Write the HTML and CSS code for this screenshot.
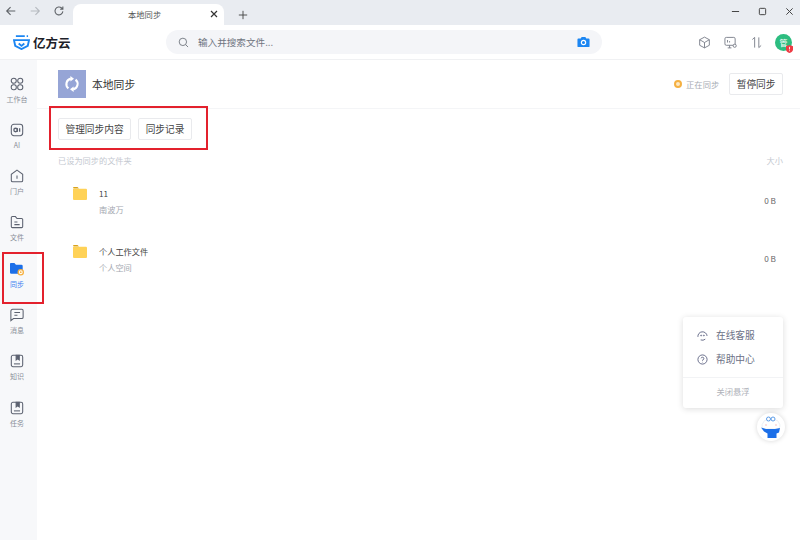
FILE: index.html
```html
<!DOCTYPE html>
<html lang="zh-CN">
<head>
    <meta charset="UTF-8">
    <title>本地同步</title>
    <link rel="stylesheet" href="styles.css">
</head>
<body>
    <div class="window">
        <!-- Browser title bar -->
        <div class="titlebar">
            <div class="nav-btns">
                <svg class="nav-icon" viewBox="0 0 14 14"><path d="M12 7H2M6.500 2.500 2 7l4.500 4.500" /></svg>
                <svg class="nav-icon nav-off" viewBox="0 0 14 14"><path d="M2 7h10M7.500 2.500 12 7l-4.500 4.500" /></svg>
                <svg class="nav-icon" viewBox="0 0 14 14"><path d="M11.500 7.500A4.600 4.600 0 1 1 10 3.500L11.500 5M11.500 1.800V5H8.300" /></svg>
            </div>
            <div class="tab">
                <span class="tab-title">本地同步</span>
                <svg class="tab-close" viewBox="0 0 8 8"><path d="M1 1l6 6M7 1 1 7" /></svg>
            </div>
            <svg class="tab-add" viewBox="0 0 12 12"><path d="M6 1v10M1 6h10" /></svg>
            <div class="win-btns">
                <svg class="win-icon" viewBox="0 0 10 10"><path d="M1 5h8" /></svg>
                <svg class="win-icon" viewBox="0 0 10 10"><rect x="1.500" y="1.500" width="7" height="7" rx="1" /></svg>
                <svg class="win-icon" viewBox="0 0 10 10"><path d="M1.500 1.500l7 7M8.500 1.500l-7 7" /></svg>
            </div>
        </div>

        <!-- App header with logo and search -->
        <div class="appbar">
            <div class="logo">
                <svg class="logo-mark" viewBox="0 0 18 16"><path d="M3 1.200h9.500M14.500 1.200h1.500" /><path d="M1 5.500h16l-1.300 6L9 15l-6.700-3.500z" /><path d="M6 9l3 2.600L12 9" /></svg>
                <span class="logo-text">亿方云</span>
            </div>
            <div class="search">
                <svg class="search-icon" viewBox="0 0 14 14"><circle cx="6.200" cy="6.200" r="4.700" /><path d="M9.800 9.800 12.800 12.800" /></svg>
                <span class="search-text">输入并搜索文件...</span>
                <svg class="camera" viewBox="0 0 14 12"><path d="M1.500 2.200h2.500L5 .7h4l1 1.500h2.500a1 1 0 0 1 1 1v7.300a1 1 0 0 1-1 1h-11a1 1 0 0 1-1-1V3.200a1 1 0 0 1 1-1z" fill="#1c86f2" /><circle cx="7" cy="6.600" r="2.300" fill="none" stroke="#fff" stroke-width="1.300" /></svg>
            </div>
            <div class="app-tools">
                <svg class="tool-icon" viewBox="0 0 14 14"><path d="M7 1.200 12.200 4v6L7 12.800 1.800 10V4zM1.800 4 7 7l5.200-3M7 7v5.800" /></svg>
                <svg class="tool-icon" viewBox="0 0 14 14"><rect x="1" y="1.500" width="11" height="8.500" rx="1.500" /><path d="M4 12.800h4M6 10v2.800M3.800 4.300v2.700M6 5.500v1.500" /><circle cx="11.500" cy="10.500" r="1.700" fill="#fff" /></svg>
                <svg class="tool-icon" viewBox="0 0 14 14"><path d="M5 12.500V1.500L2.500 3.800M9.500 1.500v11l2.500-2.300" /></svg>
                <div class="avatar">
                    管
                    <svg class="avatar-badge" viewBox="0 0 8 9"><path d="M4 0 8 1.300V5C8 7 6 8.300 4 9 2 8.300 0 7 0 5V1.300z" fill="#ee3b44" /><path d="M4 2v3M4 6v1" stroke="#fff" /></svg>
                </div>
            </div>
        </div>

        <div class="body">
            <!-- Left navigation -->
            <nav class="sidebar">
                <a class="nav-item">
                    <svg class="nav-svg" viewBox="0 0 16 16"><circle cx="4.300" cy="4.300" r="2.900" /><circle cx="11.700" cy="4.300" r="2.900" /><rect x="1.400" y="8.800" width="5.800" height="5.800" rx="2.500" /><rect x="8.800" y="8.800" width="5.800" height="5.800" rx="2.500" /></svg>
                    <span>工作台</span>
                </a>
                <a class="nav-item">
                    <svg class="nav-svg" viewBox="0 0 16 16"><rect x="1.500" y="1.500" width="13" height="13" rx="3" /><circle cx="6.400" cy="8" r="2" stroke-width="1.500" /><path d="M8.400 6v4M11 6v4" stroke-width="1.500" /></svg>
                    <span>AI</span>
                </a>
                <a class="nav-item">
                    <svg class="nav-svg" viewBox="0 0 16 16"><path d="M8 1.300 14.500 6v7a1.500 1.500 0 0 1-1.500 1.500H3A1.500 1.500 0 0 1 1.500 13V6z" /><path d="M8 7.500v3.500" /></svg>
                    <span>门户</span>
                </a>
                <a class="nav-item">
                    <svg class="nav-svg" viewBox="0 0 16 16"><path d="M1.500 3A1.200 1.200 0 0 1 2.700 1.800h3.500L8 4h5.300a1.200 1.200 0 0 1 1.200 1.200v8a1.200 1.200 0 0 1-1.200 1.200H2.700a1.200 1.200 0 0 1-1.200-1.200z" /><path d="M5 8h3.500M5 11h6" /></svg>
                    <span>文件</span>
                </a>
                <a class="nav-item nav-active">
                    <svg class="nav-svg sync-svg" viewBox="0 0 16 16"><path d="M0 2a1 1 0 0 1 1-1h4l1.800 2H13a1.500 1.500 0 0 1 1.500 1.500V12a1.500 1.500 0 0 1-1.500 1.500H1.500A1.500 1.500 0 0 1 0 12z" fill="#1c6fe8" /><circle cx="12.300" cy="11.700" r="3.700" fill="#f5b041" /><circle cx="12.300" cy="11.700" r="1.600" fill="none" stroke="#fff" /></svg>
                    <span>同步</span>
                </a>
                <a class="nav-item">
                    <svg class="nav-svg" viewBox="0 0 16 16"><path d="M3 1.500h10.500A1.500 1.500 0 0 1 15 3v7.500a1.500 1.500 0 0 1-1.500 1.500H4l-3 2.500V3.500A2 2 0 0 1 3 1.500z" /><path d="M5 5.200h6.500M5 8.300h3.500" /></svg>
                    <span>消息</span>
                </a>
                <a class="nav-item">
                    <svg class="nav-svg" viewBox="0 0 16 16"><rect x="1.500" y="1.500" width="13" height="13" rx="1.800" /><path d="M7 1.500v5.200l1.800-1.300 1.800 1.300V1.500z" fill="#5c6270" /><path d="M4.500 11.300h7" /></svg>
                    <span>知识</span>
                </a>
                <a class="nav-item">
                    <svg class="nav-svg" viewBox="0 0 16 16"><rect x="1.500" y="1.500" width="13" height="13" rx="1.800" /><path d="M7 1.500v5.200l1.800-1.300 1.800 1.300V1.500z" fill="#5c6270" /><path d="M4.500 11.300h7" /></svg>
                    <span>任务</span>
                </a>
            </nav>

            <main class="content">
                <div class="page-head">
                    <div class="page-icon">
                        <svg viewBox="0 0 20 20"><path d="M5.500 15.500A7 7 0 0 1 8.500 3.300" class="sync-arc" /><path d="M8 0l4.500 3.400L8 6.800z" /><path d="M14.500 4.500A7 7 0 0 1 11.500 16.700" class="sync-arc" /><path d="M12 20l-4.500-3.400L12 13.200z" /></svg>
                    </div>
                    <h1 class="page-title">本地同步</h1>
                    <div class="sync-status">
                        <span class="status-dot"></span>
                        <span>正在同步</span>
                    </div>
                    <button class="btn">暂停同步</button>
                </div>

                <div class="actions">
                    <button class="btn">管理同步内容</button>
                    <button class="btn">同步记录</button>
                </div>

                <div class="list-head">
                    <span>已设为同步的文件夹</span>
                    <span>大小</span>
                </div>

                <div class="file-row">
                    <svg class="folder" viewBox="0 0 14 13"><path d="M0 1a1 1 0 0 1 1-1h3.500l1.500 1.500H1z" fill="#d9a21b" /><path d="M0 1.800h13a1 1 0 0 1 1 1V12a1 1 0 0 1-1 1H1a1 1 0 0 1-1-1z" fill="#ffd257" /></svg>
                    <div class="file-info">
                        <div class="file-name">11</div>
                        <div class="file-owner">南波万</div>
                    </div>
                    <div class="file-size">0 B</div>
                </div>
                <div class="file-row">
                    <svg class="folder" viewBox="0 0 14 13"><path d="M0 1a1 1 0 0 1 1-1h3.500l1.500 1.500H1z" fill="#d9a21b" /><path d="M0 1.800h13a1 1 0 0 1 1 1V12a1 1 0 0 1-1 1H1a1 1 0 0 1-1-1z" fill="#ffd257" /></svg>
                    <div class="file-info">
                        <div class="file-name">个人工作文件</div>
                        <div class="file-owner">个人空间</div>
                    </div>
                    <div class="file-size">0 B</div>
                </div>
            </main>
        </div>

        <!-- Red annotation boxes -->
        <div class="mark mark-nav"></div>
        <div class="mark mark-actions"></div>

        <!-- Floating help panel -->
        <div class="float-panel">
            <div class="float-item">
                <svg class="float-icon" viewBox="0 0 12 12"><path d="M1 7.500A5 5 0 1 1 11 6.500M9 10a5 5 0 0 1-5 .8" /><circle cx="4.500" cy="6" r=".5" /><circle cx="7.500" cy="6" r=".5" /></svg>
                <span>在线客服</span>
            </div>
            <div class="float-item">
                <svg class="float-icon" viewBox="0 0 12 12"><circle cx="6" cy="6" r="5" /><path d="M4.500 4.700A1.500 1.500 0 1 1 6 6.500v.7M6 8.600v.5" /></svg>
                <span>帮助中心</span>
            </div>
            <div class="float-close">关闭悬浮</div>
        </div>
        <div class="mascot">
            <svg viewBox="0 0 26 26"><path d="M6 15a4 4 0 0 1-1-6 4 4 0 0 1 4-3 6 6 0 0 1 8 0 4 4 0 0 1 4 3 4 4 0 0 1-1 6z" fill="#fff" stroke="#dfe4ec" stroke-width=".6" /><circle cx="10.500" cy="5" r="2" fill="#fff" stroke="#5d9de8" /><circle cx="15" cy="5" r="2" fill="#fff" stroke="#5d9de8" /><circle cx="8" cy="11" r="1.100" fill="#fbdada" /><circle cx="18" cy="11" r="1.100" fill="#fbdada" /><path d="M3 13.500 8 15l1 0h8l5-1-1 4.500-2.500 1V24H9.500v-4.500L6 17.500z" fill="#1c6fe8" /></svg>
        </div>
    </div>
</body>
</html>
```

FILE: styles.css
```css
/* General layout */
* {
    box-sizing: border-box;
}

html,
body {
    margin: 0;
    height: 100%;
}

body {
    font-family: "Noto Sans CJK SC", "Noto Sans", sans-serif;
    background-color: #fff;
    overflow: hidden;
}

.window {
    position: relative;
    width: 800px;
    height: 540px;
    display: flex;
    flex-direction: column;
    overflow: hidden;
}

svg {
    display: block;
    fill: none;
}

/* Browser title bar */
.titlebar {
    height: 25px;
    flex: none;
    display: flex;
    align-items: flex-end;
    background-color: #e9ecf1;
}

.nav-btns {
    width: 73px;
    height: 25px;
    padding: 5px 0 0 5px;
    display: flex;
    gap: 12px;
    flex: none;
}

.nav-icon {
    width: 12px;
    height: 12px;
    stroke: #5f6368;
    stroke-width: 1.300;
}

.nav-off {
    stroke: #b5b9bf;
}

.tab {
    width: 151px;
    height: 21px;
    flex: none;
    display: flex;
    align-items: center;
    background-color: #fff;
    border-radius: 8px 8px 0 0;
    padding: 0 6px 2px 55px;
}

.tab-title {
    font-size: 8.300px;
    color: #555;
    flex: 1;
}

.tab-close {
    width: 8px;
    height: 8px;
    stroke: #333;
    stroke-width: 1.200;
}

.tab-add {
    width: 10px;
    height: 10px;
    margin: 0 0 5px 14px;
    stroke: #444;
    stroke-width: 1.100;
    flex: none;
}

.win-btns {
    margin-left: auto;
    height: 25px;
    padding: 7px 6px 0 0;
    display: flex;
    gap: 18px;
}

.win-icon {
    width: 9px;
    height: 9px;
    stroke: #444;
    stroke-width: 1.100;
}

/* App header */
.appbar {
    height: 35px;
    flex: none;
    display: flex;
    align-items: center;
    border-bottom: 1px solid #f0f1f3;
    position: relative;
}

.logo {
    width: 166px;
    flex: none;
    padding-left: 13px;
    display: flex;
    align-items: center;
    gap: 3px;
}

.logo-mark {
    width: 17px;
    height: 15px;
    stroke: #1c86f2;
    stroke-width: 2;
}

.logo-text {
    font-size: 12.500px;
    font-weight: 700;
    color: #1d2129;
}

.search {
    width: 436px;
    height: 24px;
    flex: none;
    display: flex;
    align-items: center;
    background-color: #f4f5f8;
    border-radius: 12px;
    padding: 0 12px;
}

.search-icon {
    width: 11px;
    height: 11px;
    stroke: #6b7079;
    stroke-width: 1.100;
}

.search-text {
    margin-left: 9px;
    font-size: 9.600px;
    color: #6f7480;
    flex: 1;
}

.camera {
    width: 13px;
    height: 12px;
}

.app-tools {
    margin-left: auto;
    display: flex;
    align-items: center;
    gap: 13px;
    padding-right: 8px;
}

.tool-icon {
    width: 13px;
    height: 13px;
    stroke: #7b808a;
    stroke-width: 1;
}

.avatar {
    position: relative;
    width: 17px;
    height: 17px;
    margin-left: -1px;
    border-radius: 50%;
    background-color: #2dbd80;
    color: #fff;
    font-size: 8px;
    line-height: 17px;
    text-align: center;
}

.avatar-badge {
    position: absolute;
    right: -1px;
    bottom: -2px;
    width: 7px;
    height: 8px;
}

/* Sidebar */
.body {
    flex: 1;
    display: flex;
    min-height: 0;
}

.sidebar {
    width: 37px;
    flex: none;
    background-color: #f7f8fa;
    display: flex;
    flex-direction: column;
    align-items: center;
    padding-top: 16.500px;
    gap: 17px;
}

.nav-item {
    width: 100%;
    height: 29.300px;
    padding-right: 3px;
    display: flex;
    flex-direction: column;
    align-items: center;
    font-size: 7px;
    line-height: 10px;
    color: #8a8f99;
}

.nav-svg {
    width: 14px;
    height: 14px;
    margin-bottom: 3px;
    stroke: #5c6270;
    stroke-width: 1.200;
}

.nav-active {
    color: #3b82f0;
}

.sync-svg {
    stroke: none;
}

/* Main content */
.content {
    flex: 1;
    min-width: 0;
    display: flex;
    flex-direction: column;
}

.page-head {
    height: 49px;
    flex: none;
    display: flex;
    align-items: center;
    border-bottom: 1px solid #f4f5f7;
    padding: 0 17px 0 21px;
}

.page-icon {
    width: 28px;
    height: 28px;
    background-color: #96a5d6;
    display: flex;
    align-items: center;
    justify-content: center;
}

.page-icon svg {
    width: 16px;
    height: 16px;
    fill: #fff;
}

.sync-arc {
    fill: none;
    stroke: #fff;
    stroke-width: 2.600;
}

.page-title {
    margin: 0 0 0 6px;
    font-size: 10.800px;
    font-weight: 400;
    color: #333;
}

.sync-status {
    margin-left: auto;
    display: flex;
    align-items: center;
    gap: 4px;
    font-size: 8.300px;
    color: #a8acb4;
}

.status-dot {
    width: 8px;
    height: 8px;
    border-radius: 50%;
    border: 2.500px solid #f5b041;
    background-color: #fde9c4;
}

.btn {
    height: 22px;
    padding: 0 6.500px;
    font-family: inherit;
    font-size: 9.700px;
    color: #444;
    background-color: #fff;
    border: 1px solid #e9eaed;
    border-radius: 2px;
}

.page-head .btn {
    margin-left: 10px;
}

.actions {
    flex: none;
    display: flex;
    gap: 7px;
    padding: 9px 0 0 21px;
}

.list-head {
    flex: none;
    display: flex;
    justify-content: space-between;
    padding: 14px 17px 0 21px;
    font-size: 8.200px;
    line-height: 13px;
    color: #c4c8d0;
}

.file-row {
    height: 58px;
    flex: none;
    display: flex;
    padding: 18px 24px 0 36px;
}

.folder {
    width: 14px;
    height: 13px;
    margin-top: 2px;
}

.file-info {
    margin-left: 12px;
    flex: 1;
}

.file-name {
    font-size: 8.200px;
    line-height: 13px;
    margin-top: 2px;
    color: #444;
}

.file-owner {
    margin-top: 3px;
    font-size: 8.200px;
    line-height: 13px;
    color: #a4a8b0;
}

.file-size {
    margin-top: 9px;
    font-size: 8.200px;
    line-height: 13px;
    color: #666;
}

/* Annotation boxes on top of the screenshot */
.mark {
    position: absolute;
    border: 2px solid #e3212d;
}

.mark-nav {
    left: 2px;
    top: 252px;
    width: 42px;
    height: 52px;
}

.mark-actions {
    left: 49px;
    top: 106px;
    width: 159px;
    height: 44px;
}

/* Floating help panel */
.float-panel {
    position: absolute;
    left: 683px;
    top: 317px;
    width: 100px;
    height: 91px;
    background-color: #fff;
    border-radius: 3px;
    box-shadow: 0 1px 6px rgba(0, 0, 0, 0.14);
    padding-top: 6px;
}

.float-item {
    height: 24px;
    display: flex;
    align-items: center;
    padding-left: 14px;
    gap: 8px;
    font-size: 9.700px;
    line-height: 20px;
    color: #6b7085;
}

.float-icon {
    width: 11px;
    height: 11px;
    stroke: #5f6583;
    stroke-width: 1;
}

.float-close {
    margin-top: 6px;
    border-top: 1px solid #f2f3f5;
    text-align: center;
    font-size: 8.300px;
    line-height: 26px;
    color: #b0b3ba;
}

.mascot {
    position: absolute;
    left: 757px;
    top: 413px;
    width: 28px;
    height: 28px;
    border-radius: 50%;
    background-color: #fff;
    box-shadow: 0 0 5px rgba(0, 0, 0, 0.16);
    padding: 1px;
}
```
